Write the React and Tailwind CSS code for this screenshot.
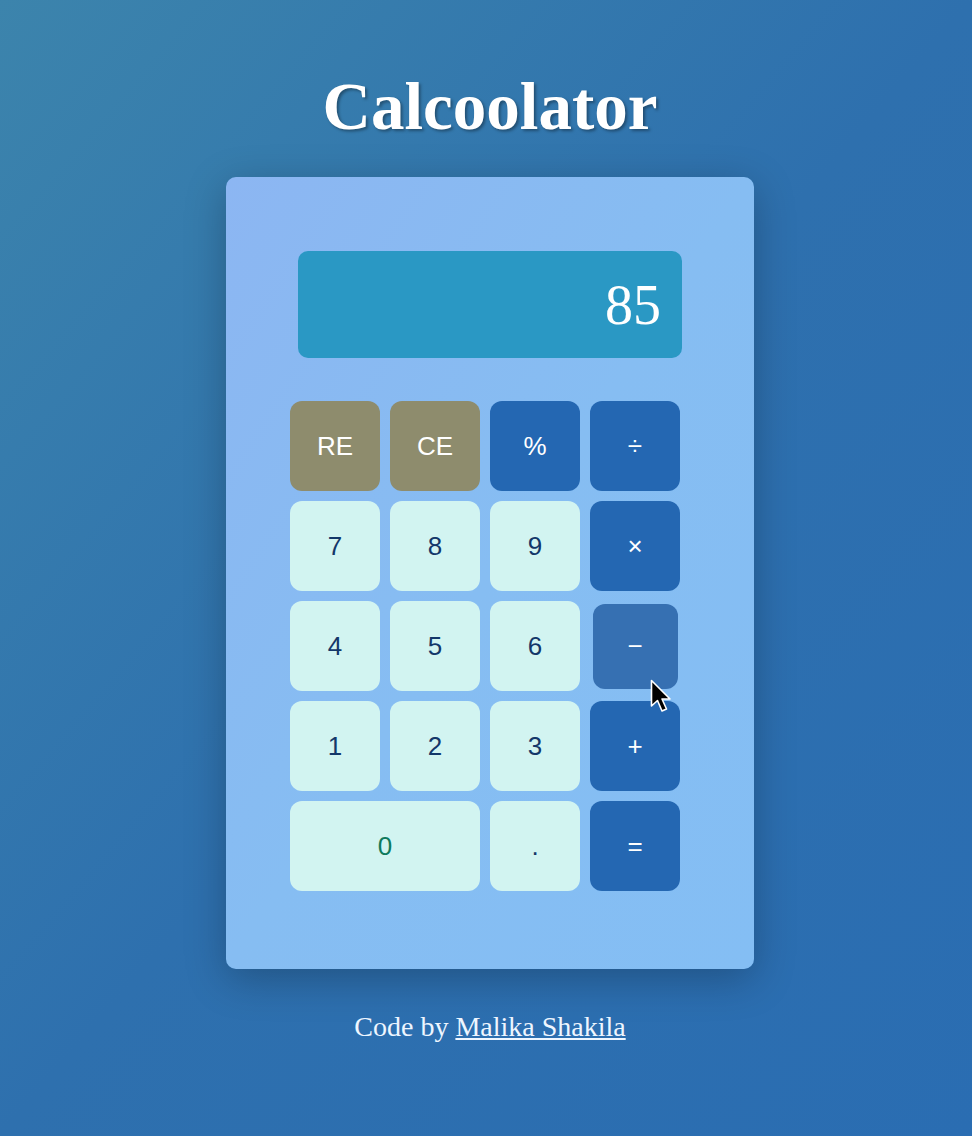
import React from "react";

const serif = { fontFamily: '"Liberation Serif", "Times New Roman", serif' };
const sans = { fontFamily: '"Liberation Sans", Arial, sans-serif' };

function Btn({ children, kind, className = "" }) {
  const base =
    "flex items-center justify-center rounded-[12px] text-[26px] select-none";
  const kinds = {
    gray: "bg-[#8e8c6d] text-white",
    op: "bg-[#2467b2] text-white",
    num: "bg-[#d2f4f1] text-[#133769]",
    zero: "bg-[#d2f4f1] text-[#0e7a5c]",
  };
  return (
    <div className={`${base} ${kinds[kind]} ${className}`} style={sans}>
      {children}
    </div>
  );
}

export default function App() {
  return (
    <div className="min-h-[1136px] w-full pl-[8px] bg-gradient-to-br from-[#3c84ac] via-[#2e70ae] to-[#2a6db2] flex flex-col items-center relative overflow-hidden">
      <h1
        className="mt-[66px] text-[67px] leading-[80px] font-bold text-white [text-shadow:2px_2px_3px_rgba(0,0,0,0.35)]"
        style={serif}
      >
        Calcoolator
      </h1>
      <div className="mt-[31px] w-[528px] h-[792px] rounded-[10px] bg-gradient-to-br from-[#8cb6f2] via-[#86bdf2] to-[#84bef4] shadow-[0_10px_40px_rgba(0,0,0,0.25)] pt-[74px]">
        <div className="mx-auto w-[384px] h-[107px] rounded-[10px] bg-[#2a98c4] flex items-center justify-end pr-[21px]">
          <span className="text-[56px] text-white leading-none" style={serif}>
            85
          </span>
        </div>
        <div className="mt-[43px] ml-[64px] w-[390px] grid grid-cols-4 auto-rows-[90px] gap-[10px]">
          <Btn kind="gray">RE</Btn>
          <Btn kind="gray">CE</Btn>
          <Btn kind="op">%</Btn>
          <Btn kind="op">÷</Btn>
          <Btn kind="num">7</Btn>
          <Btn kind="num">8</Btn>
          <Btn kind="num">9</Btn>
          <Btn kind="op">×</Btn>
          <Btn kind="num">4</Btn>
          <Btn kind="num">5</Btn>
          <Btn kind="num">6</Btn>
          <div className="flex items-center justify-center">
            <Btn kind="op" className="w-[85px] h-[85px] bg-[#3670b2]">
              −
            </Btn>
          </div>
          <Btn kind="num">1</Btn>
          <Btn kind="num">2</Btn>
          <Btn kind="num">3</Btn>
          <Btn kind="op">+</Btn>
          <Btn kind="zero" className="col-span-2">
            0
          </Btn>
          <Btn kind="num">.</Btn>
          <Btn kind="op">=</Btn>
        </div>
      </div>
      <p className="mt-[37px] text-[28px] text-[#eef6ff]" style={serif}>
        Code by{" "}
        <a className="underline text-[#eef6ff]" href="#">
          Malika Shakila
        </a>
      </p>
      <svg
        className="absolute left-[650px] top-[679px]"
        width="24"
        height="36"
        viewBox="0 0 24 36"
      >
        <path
          d="M1.5 1.5 L1.5 27 L7.5 21.5 L12 32 L16.5 30 L12 20 L20 20 Z"
          fill="#000"
          stroke="#fff"
          strokeWidth="1.6"
          strokeLinejoin="round"
        />
      </svg>
    </div>
  );
}
